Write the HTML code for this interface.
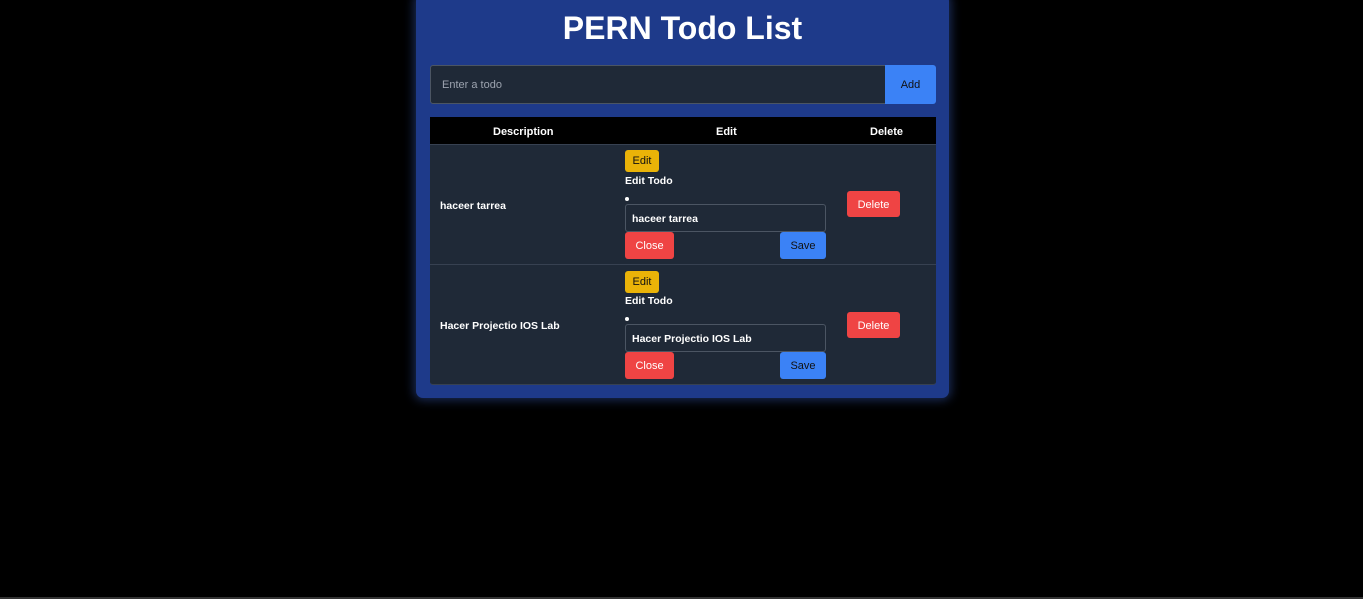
<!DOCTYPE html>
<html><head><style>
*{box-sizing:border-box;margin:0;padding:0}
body{width:1363px;height:599px;background:#000;font-family:"Liberation Sans",Arial,sans-serif;position:relative;overflow:hidden}
.a{position:absolute}
.card{left:416px;top:-6px;width:533px;height:404px;background:#1e3a8a;border-radius:7px;box-shadow:0 0 10px 2px rgba(59,100,200,.45)}
h1{position:absolute;left:416px;width:533px;top:10px;text-align:center;color:#fff;font-size:32px;font-weight:bold}
.inp{left:430px;top:65px;width:456px;height:39px;background:#1f2937;border:1px solid #4b5563;border-radius:3px 0 0 3px;color:#9ca3af;font-size:11px;padding:13px 11px}
.add{left:885px;top:65px;width:51px;height:39px;background:#3b82f6;border-radius:0 3px 3px 0;color:#111;font-size:11px;text-align:center;line-height:40px}
.thead{left:430px;top:117px;width:506px;height:28px;background:#000;border-bottom:1px solid #374151;color:#fff;font-size:11px;font-weight:bold}
.thead span{position:absolute;top:9px}
.row{left:430px;width:506px;height:120px;background:#1f2937;border-bottom:1px solid #374151}
.btn{position:absolute;border-radius:3px;font-size:11px;text-align:center}
.desc{position:absolute;left:10px;color:#fff;font-size:10.5px;font-weight:bold}
.et{position:absolute;left:195px;color:#fff;font-size:10.5px;font-weight:bold}
</style></head><body>
<div class="a card"></div>
<h1>PERN Todo List</h1>
<div class="a inp">Enter a todo</div>
<div class="a add">Add</div>
<div class="a thead"><span style="left:63px">Description</span><span style="left:286px">Edit</span><span style="left:440px">Delete</span></div>

<div class="a row" style="top:145px">
 <div class="desc" style="top:55px">haceer tarrea</div>
 <div class="btn" style="left:195px;top:5px;width:34px;height:22px;background:#eab308;color:#111;line-height:23px">Edit</div>
 <div class="et" style="top:30px">Edit Todo</div>
 <div class="a" style="left:195px;top:52px;width:4px;height:4px;border-radius:50%;background:#fff"></div>
 <div class="a" style="left:195px;top:59px;width:201px;height:28px;border:1px solid #4b5563;border-radius:3px;color:#fff;font-size:10.5px;font-weight:bold;padding:8px 6px">haceer tarrea</div>
 <div class="btn" style="left:195px;top:87px;width:49px;height:27px;background:#ef4444;color:#fff;line-height:29px">Close</div>
 <div class="btn" style="left:350px;top:87px;width:46px;height:27px;background:#3b82f6;color:#111;line-height:29px">Save</div>
 <div class="btn" style="left:417px;top:46px;width:53px;height:26px;background:#ef4444;color:#fff;line-height:28px">Delete</div>
</div>

<div class="a row" style="top:265px;border-radius:0 0 3px 3px">
 <div class="desc" style="top:55px">Hacer Projectio IOS Lab</div>
 <div class="btn" style="left:195px;top:6px;width:34px;height:22px;background:#eab308;color:#111;line-height:23px">Edit</div>
 <div class="et" style="top:30px">Edit Todo</div>
 <div class="a" style="left:195px;top:52px;width:4px;height:4px;border-radius:50%;background:#fff"></div>
 <div class="a" style="left:195px;top:59px;width:201px;height:28px;border:1px solid #4b5563;border-radius:3px;color:#fff;font-size:10.5px;font-weight:bold;padding:8px 6px">Hacer Projectio IOS Lab</div>
 <div class="btn" style="left:195px;top:87px;width:49px;height:27px;background:#ef4444;color:#fff;line-height:29px">Close</div>
 <div class="btn" style="left:350px;top:87px;width:46px;height:27px;background:#3b82f6;color:#111;line-height:29px">Save</div>
 <div class="btn" style="left:417px;top:47px;width:53px;height:26px;background:#ef4444;color:#fff;line-height:28px">Delete</div>
</div>
<div class="a" style="left:0;top:597px;width:1363px;height:2px;background:#333"></div>
</body></html>
